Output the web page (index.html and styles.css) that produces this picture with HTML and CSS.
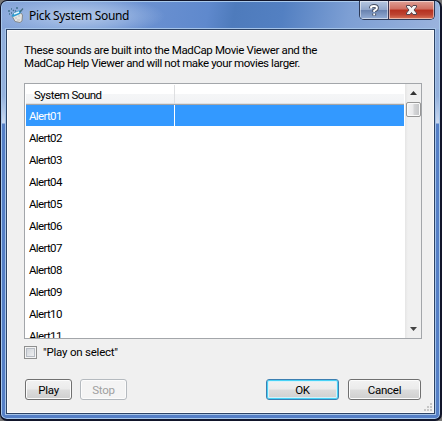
FILE: index.html
```html
<!DOCTYPE html>
<html lang="en">
<head>
<meta charset="utf-8">
<title>Pick System Sound</title>
<link rel="stylesheet" href="styles.css">
</head>
<body>
<div class="window">
  <header class="titlebar">
    <svg class="app-icon" width="17" height="17" viewBox="0 0 17 17">
      <path d="M4 9L6 6L13 6L14.5 8L14 14L12 15.5L7 14.5Z" fill="#e4e4e2" stroke="#848a8e"/>
      <path d="M3.5 9Q6 4 14 3L12 7L5 10Z" fill="#2d9bd0"/>
      <path d="M12 5L15 1.5" stroke="#466d82" stroke-width="1.2"/>
      <path d="M6 7L11 5" stroke="#e8f8ff" stroke-width="1.5"/>
      <path d="M7 11h2M10 9h2M9 13h3" stroke="#bfc1c0"/>
      <path d="M0 4h2M3 6h1M5 3l1 1M8 1h2M3 2h1M1 7h1M7 4h1" stroke="#41738f" stroke-width="1.3"/>
    </svg>
    <span class="title">Pick System Sound</span>
    <div class="controls">
      <div class="control help">
        <svg width="12" height="13" viewBox="0 0 12 13"><path d="M3 4.2V3.4Q3 2 6 2T9 4Q9 5.4 6.2 6.6V8M6.2 9.5V11.5" fill="none" stroke="#454e61" stroke-width="3.8"/><path d="M3 4.4V3.4Q3 2 6 2T9 4Q9 5.4 6.2 6.6V8M6.2 9.5V11.2" fill="none" stroke="#fff" stroke-width="1.9"/></svg>
      </div>
      <div class="control close">
        <svg width="13" height="12" viewBox="0 0 13 12"><path d="M1.5 1.5H5L6.5 3.5L8 1.5H11.5V3L9 6L11.5 9V10.5H8L6.5 8.5L5 10.5H1.5V9L4 6L1.5 3Z" fill="#f4f4f4" stroke="#55454f"/></svg>
      </div>
    </div>
  </header>
  <main class="client">
    <p class="intro"><span class="line1">These sounds are built into the MadCap Movie Viewer and the</span><br><span class="line2">MadCap Help Viewer and will not make your movies larger.</span></p>
    <div class="list">
      <div class="table">
        <div class="head"><span>System Sound</span></div>
        <div class="rows">
          <div class="row selected">Alert01</div>
          <div class="row">Alert02</div>
          <div class="row">Alert03</div>
          <div class="row">Alert04</div>
          <div class="row">Alert05</div>
          <div class="row">Alert06</div>
          <div class="row">Alert07</div>
          <div class="row">Alert08</div>
          <div class="row">Alert09</div>
          <div class="row">Alert10</div>
          <div class="row">Alert11</div>
        </div>
      </div>
      <div class="scrollbar">
        <svg class="up" width="7" height="4" viewBox="0 0 7 4"><path d="M0 4L3.5 0L7 4Z" fill="#333"/></svg>
        <div class="thumb"></div>
        <svg class="down" width="7" height="4" viewBox="0 0 7 4"><path d="M0 0H7L3.5 4Z" fill="#444"/></svg>
      </div>
    </div>
    <label class="check"><span class="box"></span><span class="check-text">"Play on select"</span></label>
    <footer class="actions">
      <div class="button small">Play</div>
      <div class="button small disabled">Stop</div>
      <div class="button wide default">OK</div>
      <div class="button wide">Cancel</div>
    </footer>
    <svg class="grip" width="8" height="8" viewBox="0 0 8 8"><path d="M6 0h2v2h-2zM3 3h2v2h-2zM6 3h2v2h-2zM0 6h2v2h-2zM3 6h2v2h-2zM6 6h2v2h-2z" fill="#c6c6c6"/></svg>
  </main>
</div>
</body>
</html>
```
FILE: styles.css
```css
* { box-sizing: border-box; }
body {
  margin: 0;
  width: 442px;
  height: 421px;
  overflow: hidden;
  background: #777;
  font: 11.5px/13px Roboto, "Liberation Sans", Arial, sans-serif;
  color: #000;
}
.window {
  width: 442px;
  height: 421px;
  border: 1px solid #11152a;
  border-bottom-width: 2px;
  border-right-width: 2px;
  border-radius: 7px;
  padding: 0 5px 5px;
  box-shadow: inset 0 0 0 1px #a9c9ec;
  background:
    linear-gradient(180deg, rgba(160,186,224,.75) 0, rgba(175,198,230,.7) 95px, rgba(215,226,243,.9) 122px, transparent 123px),
    #557fc6;
  display: flex;
  flex-direction: column;
}
.titlebar {
  height: 27px;
  margin: 1px -4px 0;
  border-radius: 5px 5px 0 0;
  padding-left: 6px;
  display: flex;
  flex: none;
  background:
    radial-gradient(ellipse 85px 20px at 78px 14px, rgba(200,216,240,.75), rgba(170,195,232,.5) 60%, transparent),
    linear-gradient(100deg, #88a7da 0, #6b91d1 32%, #5f89cd 47%, #4e7bbc 53%, #5380c2 64%, #7d9fd4 79%, #9ab3dd 100%);
}
.app-icon { margin-top: 5px; flex: none; }
.title {
  font: 12px/17px "Noto Sans", "Open Sans", sans-serif;
  letter-spacing: -.32px;
  margin: 5px 0 0 4px;
  white-space: nowrap;
}
.controls {
  display: flex;
  width: 76px;
  height: 19px;
  margin: -1px 4px 0 auto;
  border: 1px solid #2c3957;
  border-top: 0;
  border-radius: 0 0 5px 5px;
  overflow: hidden;
}
.control {
  display: flex;
  align-items: center;
  justify-content: center;
  box-shadow: inset 0 0 0 1px rgba(255,255,255,.5);
}
.help { width: 28px; background: linear-gradient(#b6c7e1, #91a6ca 48%, #6881ae 50%, #94add5); }
.close { flex: 1; border-left: 1px solid #3d3550; background: linear-gradient(#dfa096, #cf6e60 45%, #b6301f 50%, #bd4331 75%, #d9765b); }
.client {
  position: relative;
  flex: 1;
  border: 1px solid #2d4365;
  box-shadow: 0 0 0 1px #a5c4e9, inset 0 0 0 1px #fafafa;
  background: #f0f0f0;
  padding: 14px 12px 0 17px;
}
.intro { margin: 0; height: 39px; white-space: nowrap; }
.line1 { letter-spacing: -.38px; }
.line2 { letter-spacing: -.41px; }
.list {
  width: 398px;
  height: 256px;
  border: 1px solid #a3a6aa;
  background: #fff;
  display: flex;
  overflow: hidden;
}
.table { width: 380px; height: 254px; overflow: hidden; padding: 1px 1px 0; }
.head {
  height: 20px;
  background: linear-gradient(#fff 45%, #f5f6f7 48%, #f2f3f5);
  border-bottom: 1px solid #a6a6a6;
  box-shadow: inset 0 -1px 0 #e0e1e3;
  display: flex;
}
.head span { width: 149px; padding: 4px 0 0 8px; line-height: 13px; border-right: 1px solid #dedfe1; letter-spacing: -.5px; }
.row { height: 22px; padding: 5px 0 0 3px; line-height: 13px; letter-spacing: -.65px; }
.selected {
  height: 21px;
  margin-bottom: 1px;
  color: #fff;
  background: linear-gradient(#fff, #fff) 148px 0 / 1px 100% no-repeat, #3399ff;
}
.scrollbar {
  width: 16px;
  height: 254px;
  background: linear-gradient(90deg, #e5e5e5, #f0f0f0 3px);
  display: flex;
  flex-direction: column;
  align-items: center;
}
.up { margin-top: 7px; }
.thumb {
  width: 15px;
  height: 15px;
  margin-top: 7px;
  border: 1px solid #969696;
  border-radius: 2px;
  background: linear-gradient(90deg, #f5f5f5, #e9e9eb 48%, #d5d6d8 52%, #c3c4c6);
  box-shadow: inset 0 0 0 1px #fafafa;
}
.down { margin: auto 0 7px; }
.check { display: flex; height: 13px; margin-top: 7px; }
.box {
  width: 13px;
  height: 13px;
  border: 1px solid #8e8f8f;
  box-shadow: inset 0 0 0 1px #f4f4f4, inset 0 0 0 2px #b7bcc4;
  background: linear-gradient(135deg, #c9ced5, #f6f6f6);
}
.check-text { margin-left: 6px; letter-spacing: -.22px; white-space: nowrap; }
.actions { display: flex; margin: 20px 0 0 1px; }
.button {
  height: 21px;
  border: 1px solid #707070;
  border-radius: 3px;
  box-shadow: inset 0 0 0 1px #fcfcfc;
  background: linear-gradient(#f2f2f2, #ebebeb 49%, #dddddd 51%, #cfcfcf);
  text-align: center;
  line-height: 20px;
  letter-spacing: -.25px;
}
.small { width: 47px; margin-right: 8px; }
.wide { width: 73px; margin-left: 9px; }
.disabled { color: #a0a0a0; border-color: #b5babf; background: #f4f4f4; }
.default { margin-left: auto; border-color: #3c7fb1; box-shadow: inset 0 0 0 1px #48d2f6, inset 0 0 0 2px #d7f1f8; }
.wide:last-child { margin-right: 1px; }
.grip { position: absolute; right: 2px; bottom: 2px; }
```
